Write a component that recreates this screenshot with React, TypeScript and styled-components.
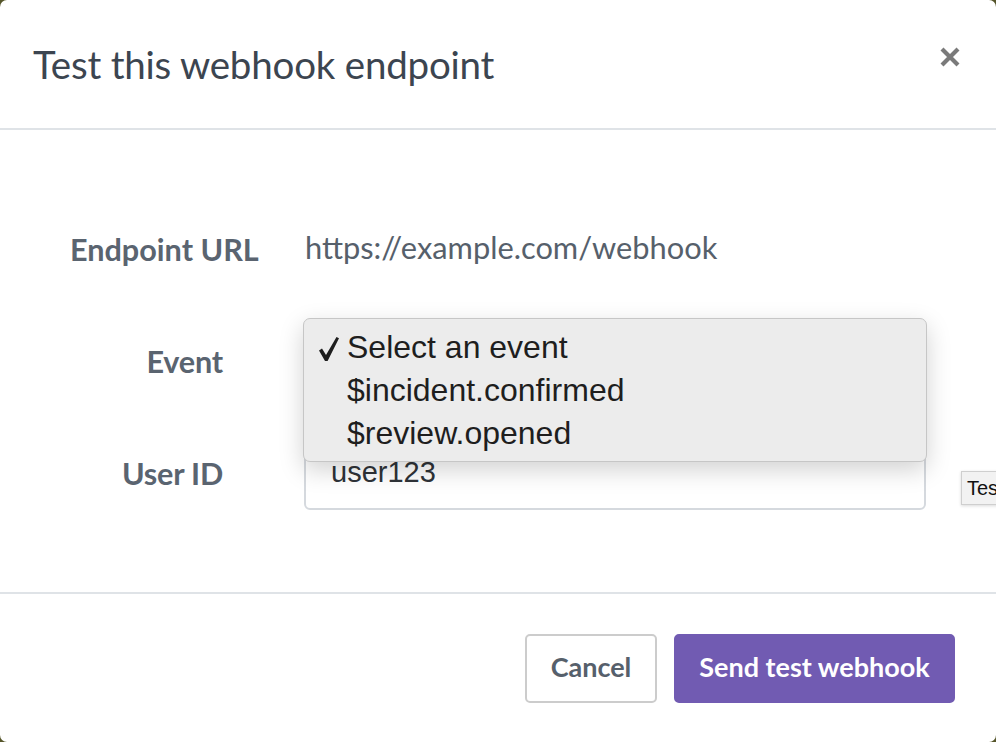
import React from "react";
import styled, { createGlobalStyle } from "styled-components";

const Global = createGlobalStyle`
  html, body { margin: 0; padding: 0; background: #55552a; }
  body { font-family: "Lato", "Open Sans", sans-serif; }
  * { box-sizing: border-box; }
`;

const Modal = styled.div`
  width: 996px;
  height: 742px;
  background: #ffffff;
  border-radius: 7px;
  display: flex;
  flex-direction: column;
  overflow: hidden;
`;

const Header = styled.div`
  height: 130px;
  flex: none;
  display: flex;
  align-items: center;
  justify-content: space-between;
  padding: 0 34px 0 33px;
  border-bottom: 2px solid #dfe3e7;
`;

const Title = styled.h1`
  margin: 0;
  font-size: 38.5px;
  font-weight: 400;
  color: #3c4550;
  letter-spacing: -0.2px;
`;

const Close = styled.button`
  border: 0;
  background: none;
  padding: 0;
  width: 24px;
  height: 24px;
  display: flex;
  align-items: center;
  justify-content: center;
  cursor: pointer;
  margin-bottom: 14px;
`;

const Body = styled.div`
  flex: 1;
  padding: 83px 0 0 0;
  display: flex;
  flex-direction: column;
  gap: 39px;
`;

const Row = styled.div`
  display: grid;
  grid-template-columns: 70px 153px 81px 622px;
  height: 73px;
  align-items: center;
  position: relative;
`;

const Label = styled.div`
  grid-column: 2;
  white-space: nowrap;
  font-size: 30.6px;
  font-weight: 700;
  color: #5a6470;
  display: flex;
  justify-content: flex-end;
  letter-spacing: -0.2px;
`;

const LabelOverflow = styled(Label)`
  justify-content: flex-start;
  letter-spacing: 0;
`;

const Value = styled.div`
  grid-column: 4;
  font-size: 30.8px;
  color: #56606b;
  padding-left: 1px;
  padding-bottom: 4px;
`;

const Field = styled.div`
  grid-column: 4;
  height: 73px;
  border: 2px solid #d5d9de;
  border-radius: 6px;
  display: flex;
  align-items: center;
  padding: 0 0 2px 25px;
  font-family: "Liberation Sans", "Arimo", sans-serif;
  font-size: 29px;
  color: #2f3338;
  background: #fff;
`;

const Popup = styled.div`
  position: absolute;
  left: 303px;
  top: -7px;
  width: 624px;
  height: 144px;
  background: #ececec;
  border: 1px solid #c6c6c6;
  border-radius: 7px;
  box-shadow: 0 8px 24px rgba(0, 0, 0, 0.18);
  padding: 7px 0 0 0;
  display: flex;
  flex-direction: column;
  z-index: 5;
`;

const Option = styled.div`
  height: 43px;
  display: flex;
  align-items: center;
  font-family: "Liberation Sans", "Arimo", sans-serif;
  font-size: 32px;
  color: #1e1e1e;
`;

const Check = styled.span`
  width: 43px;
  padding-left: 14px;
  padding-top: 2px;
  flex: none;
  display: flex;
  align-items: center;
`;

const Tooltip = styled.div`
  position: absolute;
  left: 961px;
  top: 34px;
  height: 34px;
  padding: 0 8px 0 5px;
  background: #f2f2f2;
  border: 1px solid #cfcfcf;
  box-shadow: 0 1px 3px rgba(0, 0, 0, 0.15);
  font-family: "Liberation Sans", sans-serif;
  font-size: 20px;
  color: #111;
  display: flex;
  align-items: center;
  white-space: nowrap;
`;

const Footer = styled.div`
  height: 150px;
  flex: none;
  border-top: 2px solid #dfe3e7;
  display: flex;
  justify-content: flex-end;
  align-items: flex-start;
  gap: 17px;
  padding: 40px 41px 0 0;
`;

const Button = styled.button<{ $primary?: boolean }>`
  height: 69px;
  border-radius: 5px;
  font-family: "Lato", "Open Sans", sans-serif;
  font-size: 27px;
  font-weight: 700;
  padding: 0 0 4px;
  cursor: pointer;
  border: 2px solid ${(p) => (p.$primary ? "#715bb2" : "#cccccc")};
  background: ${(p) => (p.$primary ? "#715bb2" : "#ffffff")};
  color: ${(p) => (p.$primary ? "#ffffff" : "#56606b")};
  width: ${(p) => (p.$primary ? "281px" : "132px")};
`;

const CheckMark = () => (
  <svg width="22" height="26" viewBox="0 0 22 26" aria-hidden="true">
    <path
      d="M1 14.5 L4 12.5 L8 19 L18.5 1 L21 2.2 L9.6 25 L7 25 Z"
      fill="#1e1e1e"
    />
  </svg>
);

export default function App() {
  return (
    <>
      <Global />
      <Modal>
        <Header>
          <Title>Test this webhook endpoint</Title>
          <Close aria-label="Close">
            <svg width="22" height="22" viewBox="0 0 22 22">
              <path d="M3 3 L19 19 M19 3 L3 19" stroke="#7a7a7a" strokeWidth="4.2" strokeLinecap="butt" />
            </svg>
          </Close>
        </Header>
        <Body>
          <Row>
            <LabelOverflow>Endpoint URL</LabelOverflow>
            <Value>https://example.com/webhook</Value>
          </Row>
          <Row>
            <Label>Event</Label>
            <Field>Select an event</Field>
            <Popup>
              <Option>
                <Check>
                  <CheckMark />
                </Check>
                Select an event
              </Option>
              <Option>
                <Check />$incident.confirmed
              </Option>
              <Option>
                <Check />$review.opened
              </Option>
            </Popup>
          </Row>
          <Row>
            <Label>User ID</Label>
            <Field>user123</Field>
            <Tooltip>Test</Tooltip>
          </Row>
        </Body>
        <Footer>
          <Button>Cancel</Button>
          <Button $primary>Send test webhook</Button>
        </Footer>
      </Modal>
    </>
  );
}
